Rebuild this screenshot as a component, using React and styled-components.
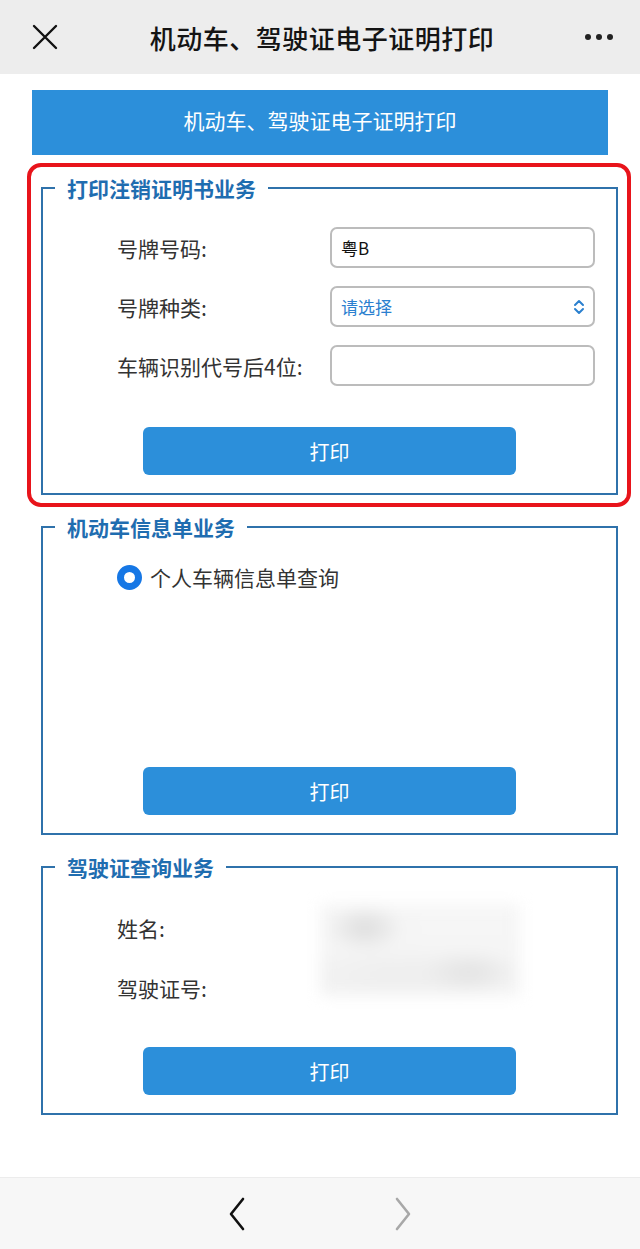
import styled, { createGlobalStyle } from "styled-components";

const GlobalStyle = createGlobalStyle`
  html, body {
    margin: 0;
    padding: 0;
    background: #fff;
    font-family: "Noto Sans CJK SC", "Noto Sans", sans-serif;
  }
  * { box-sizing: border-box; }
`;

const Screen = styled.div`
  display: flex;
  flex-direction: column;
  height: 100vh;
  min-height: 1249px;
`;

const TopBar = styled.header`
  height: 74px;
  background: #ededed;
  display: flex;
  align-items: center;
  justify-content: space-between;
  padding: 0 26px 0 30px;
`;

const IconButton = styled.span`
  display: flex;
  width: 30px;
  justify-content: center;
`;

const Title = styled.h1`
  margin: 0;
  font-size: 26px;
  font-weight: 500;
  color: #141414;
  letter-spacing: 0.5px;
`;

const Main = styled.main`
  flex: 1;
  padding-top: 16px;
`;

const Banner = styled.div`
  margin-left: 32px;
  width: 576px;
  height: 65px;
  padding-bottom: 5px;
  background: #2c8fda;
  color: #fff;
  font-size: 21px;
  display: flex;
  align-items: center;
  justify-content: center;
`;

const Highlight = styled.div`
  margin: 8px 0 0 27px;
  width: 604px;
  border: 4px solid #e8141b;
  border-radius: 14px;
  padding: 7px 9px 8px 10px;
`;

const Section = styled.fieldset`
  margin: 0;
  margin-left: ${(p) => p.$offset || 0}px;
  margin-top: ${(p) => p.$top || 0}px;
  width: 577px;
  min-width: 0;
  height: ${(p) => p.$height}px;
  border: 2px solid #2f72ab;
  padding: 0;
`;

const Legend = styled.legend`
  margin-left: 12px;
  padding: 0 12px;
  font-size: 21px;
  line-height: 28px;
  font-weight: 700;
  color: #1f6db0;
`;

const Body = styled.div`
  height: 100%;
  display: flex;
  flex-direction: column;
  padding: ${(p) => p.$top}px 21px 18px 74px;
`;

const Rows = styled.div`
  display: flex;
  flex-direction: column;
  gap: 18px;
`;

const Row = styled.div`
  display: flex;
  align-items: center;
  height: 41px;
`;

const Label = styled.span`
  width: 213px;
  font-size: 21px;
  color: #333;
`;

const Field = styled.div`
  flex: 1;
  height: 41px;
  border: 2px solid #bcbcbc;
  border-radius: 7px;
  display: flex;
  align-items: center;
  justify-content: space-between;
  padding: 0 8px 0 9px;
  font-size: 17px;
  color: ${(p) => (p.$hint ? "#2b80cf" : "#111")};
`;

const InfoGrid = styled.div`
  display: grid;
  grid-template-columns: 213px 1fr;
  grid-template-rows: 41px 41px;
  row-gap: 19px;
  align-items: center;
`;

const Blurred = styled.div`
  grid-column: 2;
  grid-row: 1 / span 2;
  align-self: start;
  width: 200px;
  height: 92px;
  margin: -3px 0 0 -10px;
  background:
    radial-gradient(ellipse 40px 24px at 45px 24px, #dcdcdc, transparent),
    radial-gradient(ellipse 50px 22px at 150px 68px, #e2e2e2, transparent),
    radial-gradient(ellipse 120px 28px at 80px 70px, #ededed, transparent),
    linear-gradient(#f6f6f6, #f4f4f4);
  filter: blur(7px);
`;

const Spacer = styled.div`
  flex: 1;
`;

const PrintButton = styled.button`
  align-self: flex-start;
  margin-left: 26px;
  width: 373px;
  height: 48px;
  border: none;
  border-radius: 6px;
  background: #2c8fda;
  color: #fff;
  font-family: inherit;
  font-size: 20px;
`;

const RadioRow = styled.label`
  display: flex;
  align-items: center;
  gap: 8px;
  font-size: 21px;
  color: #333;
`;

const RadioDot = styled.span`
  width: 25px;
  height: 25px;
  border-radius: 50%;
  border: 7px solid #1677e5;
  background: #fff;
`;

const BottomBar = styled.footer`
  height: 72px;
  background: #f7f7f7;
  border-top: 1px solid #ececec;
  display: flex;
  align-items: center;
  justify-content: center;
  gap: 148px;
`;

const Chevron = ({ dir, color }) => (
  <svg width="18" height="34" viewBox="0 0 18 34">
    <path
      d={dir === "left" ? "M15 2 L3 17 L15 32" : "M3 2 L15 17 L3 32"}
      fill="none"
      stroke={color}
      strokeWidth="2.6"
      strokeLinecap="round"
      strokeLinejoin="round"
    />
  </svg>
);

const Updown = () => (
  <svg width="12" height="16" viewBox="0 0 12 16">
    <path
      d="M2 6 L6 2 L10 6 M2 10 L6 14 L10 10"
      fill="none"
      stroke="#2b80cf"
      strokeWidth="2"
      strokeLinecap="round"
      strokeLinejoin="round"
    />
  </svg>
);

export default function App() {
  return (
    <>
      <GlobalStyle />
      <Screen>
        <TopBar>
          <IconButton>
            <svg width="26" height="26" viewBox="0 0 26 26">
              <path d="M2 2 L24 24 M24 2 L2 24" stroke="#111" strokeWidth="2.4" strokeLinecap="round" />
            </svg>
          </IconButton>
          <Title>机动车、驾驶证电子证明打印</Title>
          <IconButton>
            <svg width="30" height="8" viewBox="0 0 30 8">
              <circle cx="4" cy="4" r="3" fill="#222" />
              <circle cx="15" cy="4" r="3" fill="#222" />
              <circle cx="26" cy="4" r="3" fill="#222" />
            </svg>
          </IconButton>
        </TopBar>

        <Main>
          <Banner>机动车、驾驶证电子证明打印</Banner>

          <Highlight>
            <Section $height={321}>
              <Legend>打印注销证明书业务</Legend>
              <Body $top={25}>
                <Rows>
                  <Row>
                    <Label>号牌号码:</Label>
                    <Field>粤B</Field>
                  </Row>
                  <Row>
                    <Label>号牌种类:</Label>
                    <Field $hint>
                      请选择
                      <Updown />
                    </Field>
                  </Row>
                  <Row>
                    <Label>车辆识别代号后4位:</Label>
                    <Field />
                  </Row>
                </Rows>
                <Spacer />
                <PrintButton>打印</PrintButton>
              </Body>
            </Section>
          </Highlight>

          <Section $offset={41} $top={6} $height={322}>
            <Legend>机动车信息单业务</Legend>
            <Body $top={21}>
              <RadioRow>
                <RadioDot />
                个人车辆信息单查询
              </RadioRow>
              <Spacer />
              <PrintButton>打印</PrintButton>
            </Body>
          </Section>

          <Section $offset={41} $top={18} $height={262}>
            <Legend>驾驶证查询业务</Legend>
            <Body $top={26}>
              <InfoGrid>
                <Label>姓名:</Label>
                <Blurred />
                <Label>驾驶证号:</Label>
              </InfoGrid>
              <Spacer />
              <PrintButton>打印</PrintButton>
            </Body>
          </Section>
        </Main>

        <BottomBar>
          <Chevron dir="left" color="#111" />
          <Chevron dir="right" color="#a8a8a8" />
        </BottomBar>
      </Screen>
    </>
  );
}
